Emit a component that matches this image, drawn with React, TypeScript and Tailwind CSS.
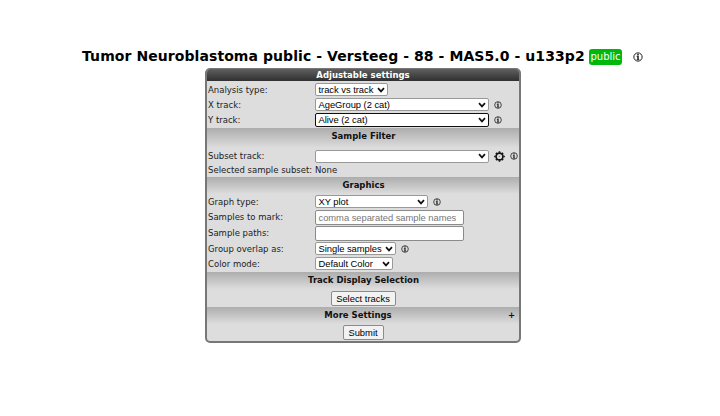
import React from "react";

type Kids = { children?: React.ReactNode };

function Info({ className = "w-[8px] h-[8px]" }: { className?: string }) {
  return (
    <svg viewBox="0 0 14 14" className={"shrink-0 " + className} fill="none" stroke="#222">
      <circle cx="7" cy="7" r="5.800" strokeWidth="1.400" />
      <path d="M7 2.400v2M7 5.400v5.400" strokeWidth="2.200" />
      <path d="M5 6h2M5 10.800h4" strokeWidth="1.200" />
    </svg>
  );
}

function Gear() {
  return (
    <svg viewBox="0 0 20 20" className="h-[11px] w-[11px] shrink-0" fill="none" stroke="#151515">
      <circle cx="10" cy="10" r="6.200" strokeWidth="3" />
      <circle cx="10" cy="10" r="1.300" fill="#888" stroke="none" />
      <path
        d="M10 .3v3M10 16.700v3M.3 10h3M16.700 10h3M3.500 3.500l2 2M14.500 14.500l2 2M3.500 16.500l2-2M14.500 5.500l2-2"
        strokeWidth="3"
      />
    </svg>
  );
}

function Field({ children, className }: Kids & { className: string }) {
  return (
    <div
      className={
        "flex shrink-0 items-center overflow-hidden rounded-[2px] bg-white pl-[2.5px] font-['Liberation_Sans',Arial,sans-serif] text-[9.4px] leading-[11px] tracking-[-0.03px] whitespace-nowrap " +
        className
      }
    >
      {children}
    </div>
  );
}

function Select({ children, className, focused }: Kids & { className: string; focused?: boolean }) {
  return (
    <Field
      className={
        "justify-between pr-[2px] text-black " +
        (focused ? "h-[14px] border-[1.5px] border-[#101010] " : "h-[13px] border border-[#999] ") +
        className
      }
    >
      <span>{children}</span>
      <svg viewBox="0 0 8 6" className="h-[6px] w-[8px] shrink-0" fill="none" stroke="#111" strokeWidth="1.7">
        <path d="M1 1.200 4 4.400 7 1.200" />
      </svg>
    </Field>
  );
}

function Row({ label, className, children }: Kids & { label: string; className: string }) {
  return (
    <div className={"flex shrink-0 items-center " + className}>
      <span className="w-[108px] shrink-0 pl-[1px]">{label}</span>
      {children}
    </div>
  );
}

function Band({ children, className, plus }: Kids & { className: string; plus?: boolean }) {
  return (
    <div
      className={
        "flex shrink-0 bg-linear-to-b from-[#adadad] to-[#dddddd] pt-[3px] text-center font-bold text-[#111] " +
        className
      }
    >
      <span className="grow pl-px">{children}</span>
      {plus && <span className="w-[11px] pr-[4px]">+</span>}
    </div>
  );
}

function Button({ children, className }: Kids & { className: string }) {
  return (
    <button
      className={
        "flex h-[15px] items-center justify-center rounded-[2px] border border-[#8b8b8b] bg-[#f2f2f2] font-['Liberation_Sans',Arial,sans-serif] text-[9.4px] leading-[11px] whitespace-nowrap text-black " +
        className
      }
    >
      {children}
    </button>
  );
}

export default function App() {
  return (
    <div className="h-[416px] w-[720px] overflow-hidden bg-white pt-[47px] font-['DejaVu_Sans',Verdana,sans-serif] text-black">
      <div className="flex h-[21px] items-center pl-[82px] whitespace-nowrap">
        <h1 className="w-[507px] pb-[3px] text-[14px] leading-[18px] font-bold tracking-[0.075px]">
          Tumor Neuroblastoma public - Versteeg - 88 - MAS5.0 - u133p2
        </h1>
        <span className="mb-[2px] flex h-[16px] w-[33px] items-center justify-center rounded-[3px] bg-[#00b80c] text-[10px] leading-none text-white">
          public
        </span>
        <Info className="mb-[2px] ml-[11px] h-[10px] w-[10px]" />
      </div>
      <div className="ml-[205px] flex h-[275px] w-[316px] flex-col overflow-hidden rounded-[5px] border-2 border-t border-[#777] bg-[#dddddd] text-[8.5px] leading-[10px] whitespace-nowrap text-[#222]">
        <div className="flex h-[12px] shrink-0 items-center justify-center bg-linear-to-b from-[#606060] to-[#303030] font-bold text-white">
          Adjustable settings
        </div>
        <Row label="Analysis type:" className="mt-px h-[15px]">
          <Select className="w-[73px]">track vs track</Select>
        </Row>
        <Row label="X track:" className="h-[15px]">
          <Select className="w-[174px]">AgeGroup (2 cat)</Select>
          <Info className="ml-[5px] h-[8px] w-[8px]" />
        </Row>
        <Row label="Y track:" className="h-[15px]">
          <Select className="w-[174px]" focused>Alive (2 cat)</Select>
          <Info className="ml-[5px] h-[8px] w-[8px]" />
        </Row>
        <Band className="mt-px h-[20px]">Sample Filter</Band>
        <Row label="Subset track:" className="h-[16px]">
          <Select className="w-[174px]" />
          <span className="ml-[5px] flex items-center gap-[5px]">
            <Gear />
            <Info />
          </span>
        </Row>
        <Row label="Selected sample subset:" className="mb-px h-[12px]">None</Row>
        <Band className="h-[17px]">Graphics</Band>
        <Row label="Graph type:" className="h-[15px]">
          <Select className="w-[113px]">XY plot</Select>
          <Info className="ml-[5px] h-[8px] w-[8px]" />
        </Row>
        <Row label="Samples to mark:" className="h-[16px]">
          <Field className="h-[15px] w-[149px] border border-[#8b8b8b] text-[#777]">comma separated sample names</Field>
        </Row>
        <Row label="Sample paths:" className="h-[16px]">
          <Field className="h-[15px] w-[149px] border border-[#8b8b8b]" />
        </Row>
        <Row label="Group overlap as:" className="h-[15px]">
          <Select className="w-[81px]">Single samples</Select>
          <Info className="ml-[5px] h-[8px] w-[8px]" />
        </Row>
        <Row label="Color mode:" className="mb-px h-[15px]">
          <Select className="w-[78px]">Default Color</Select>
        </Row>
        <Band className="h-[17px]">Track Display Selection</Band>
        <div className="flex h-[18px] shrink-0 items-center justify-center">
          <Button className="w-[65px]">Select tracks</Button>
        </div>
        <Band className="h-[17px]" plus>More Settings</Band>
        <div className="flex h-[17px] shrink-0 items-center justify-center">
          <Button className="w-[41px]">Submit</Button>
        </div>
      </div>
    </div>
  );
}
